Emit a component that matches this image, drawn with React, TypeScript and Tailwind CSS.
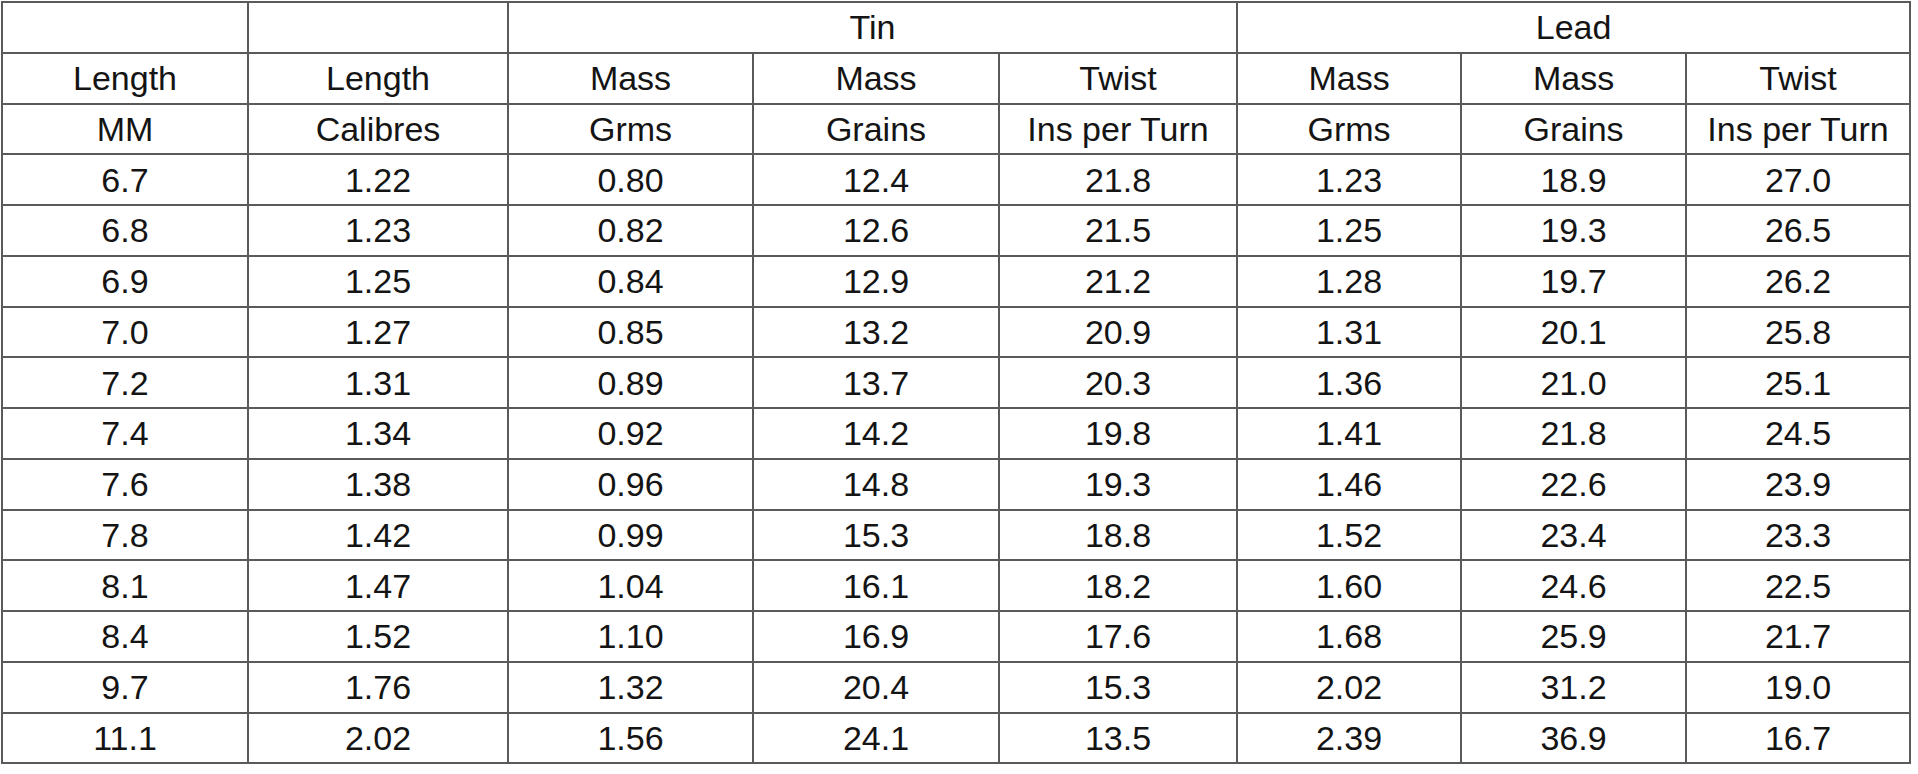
import React from "react";

const rows: string[][] = [
  ["6.7", "1.22", "0.80", "12.4", "21.8", "1.23", "18.9", "27.0"],
  ["6.8", "1.23", "0.82", "12.6", "21.5", "1.25", "19.3", "26.5"],
  ["6.9", "1.25", "0.84", "12.9", "21.2", "1.28", "19.7", "26.2"],
  ["7.0", "1.27", "0.85", "13.2", "20.9", "1.31", "20.1", "25.8"],
  ["7.2", "1.31", "0.89", "13.7", "20.3", "1.36", "21.0", "25.1"],
  ["7.4", "1.34", "0.92", "14.2", "19.8", "1.41", "21.8", "24.5"],
  ["7.6", "1.38", "0.96", "14.8", "19.3", "1.46", "22.6", "23.9"],
  ["7.8", "1.42", "0.99", "15.3", "18.8", "1.52", "23.4", "23.3"],
  ["8.1", "1.47", "1.04", "16.1", "18.2", "1.60", "24.6", "22.5"],
  ["8.4", "1.52", "1.10", "16.9", "17.6", "1.68", "25.9", "21.7"],
  ["9.7", "1.76", "1.32", "20.4", "15.3", "2.02", "31.2", "19.0"],
  ["11.1", "2.02", "1.56", "24.1", "13.5", "2.39", "36.9", "16.7"],
];

const head2 = ["Length", "Length", "Mass", "Mass", "Twist", "Mass", "Mass", "Twist"];
const head3 = ["MM", "Calibres", "Grms", "Grains", "Ins per Turn", "Grms", "Grains", "Ins per Turn"];
const widths = [246, 260, 245, 246, 238, 224, 225, 224];

const cell =
  "border-2 border-[#5a5a5a] p-0 text-center align-middle leading-none whitespace-nowrap";

export default function App() {
  return (
    <div className="w-[1918px] h-[774px] bg-white overflow-hidden">
      <table
        className="table-fixed border-collapse text-[34px] text-[#141414] mt-[1px] ml-[1px]"
        style={{ width: 1908, fontFamily: '"Liberation Sans", Arial, sans-serif' }}
      >
        <colgroup>
          {widths.map((w, i) => (
            <col key={i} style={{ width: w }} />
          ))}
        </colgroup>
        <tbody>
          <tr className="h-[50.75px]">
            <td className={cell}></td>
            <td className={cell}></td>
            <td className={cell} colSpan={3}>
              Tin
            </td>
            <td className={cell} colSpan={3}>
              Lead
            </td>
          </tr>
          <tr className="h-[50.75px]">
            {head2.map((t, i) => (
              <td key={i} className={cell}>
                {t}
              </td>
            ))}
          </tr>
          <tr className="h-[50.75px]">
            {head3.map((t, i) => (
              <td key={i} className={cell}>
                {t}
              </td>
            ))}
          </tr>
          {rows.map((r, ri) => (
            <tr key={ri} className="h-[50.75px]">
              {r.map((t, i) => (
                <td key={i} className={cell}>
                  {t}
                </td>
              ))}
            </tr>
          ))}
        </tbody>
      </table>
    </div>
  );
}
